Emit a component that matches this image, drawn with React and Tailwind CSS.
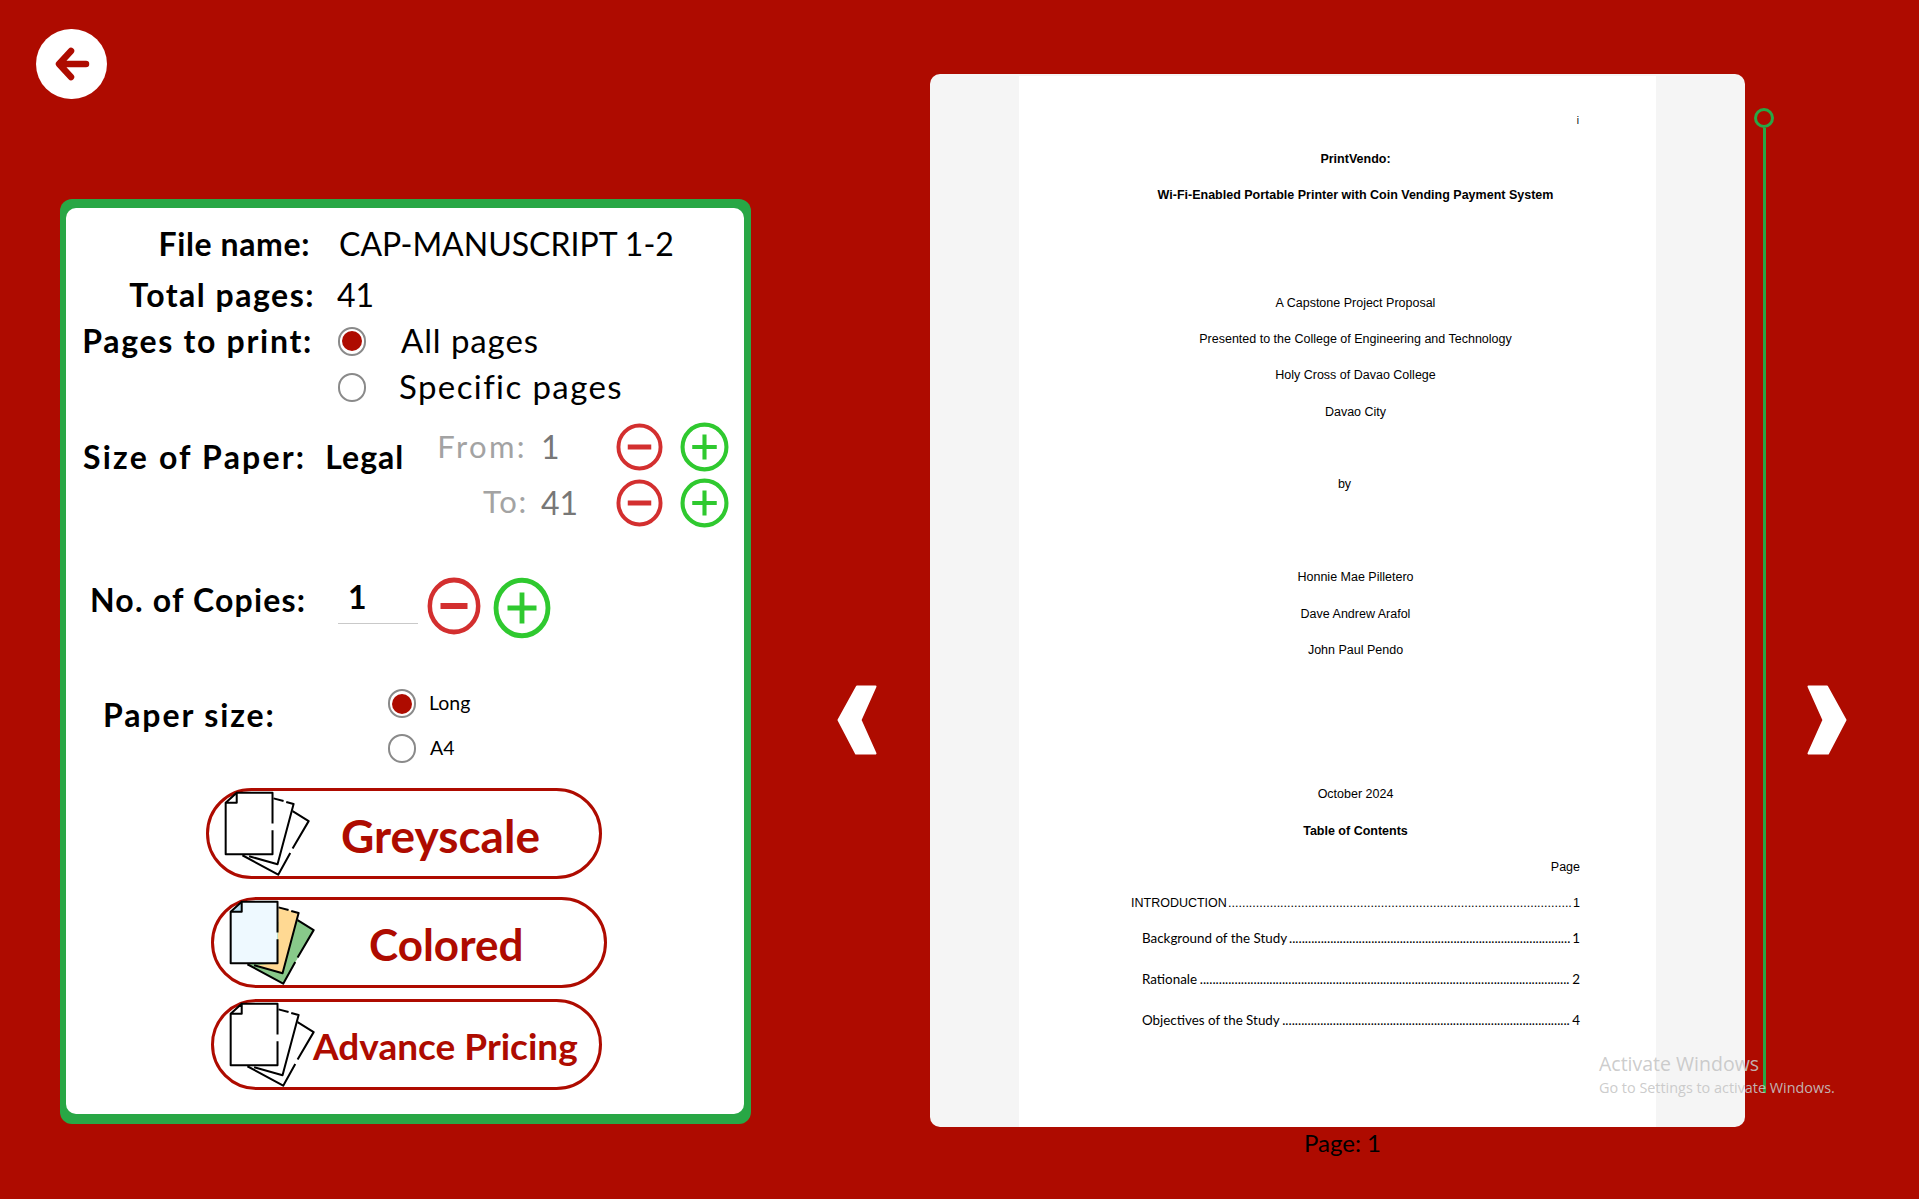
const FILLS = {
  plain: { back: "#ffffff", mid: "#ffffff", front: "#ffffff", notch: "#ffffff" },
  color: { back: "#88c98a", mid: "#ffd993", front: "#eef9ff", notch: "#b8dff0" },
};

function Papers({ kind = "plain" }) {
  const f = FILLS[kind];
  return (
    <svg viewBox="100 30 260 260" className="h-[87px] w-[87px] shrink-0">
      <polygon points="305,93 353,123 262,283 155,225 230,100" fill={f.back} />
      <polygon points="248,55 308,72 260,252 180,228 245,222" fill={f.mid} />
      <polygon points="138,38 245,38 245,222 105,222 105,68" fill={f.front} />
      <polygon points="138,38 138,68 105,68" fill={f.notch} />
      <g fill="none" stroke="#000" strokeWidth="6" strokeLinejoin="round">
        <path d="M305 93 L353 123 L305 205 M298 218 L262 283 L155 225" />
        <path d="M248 55 L278 63 M286 66 L308 72 L260 252 L175 228" />
        <path d="M138 38 H245 V130 M245 150 V222 H105 V68 L138 38 V68 H105" />
      </g>
    </svg>
  );
}

function Radio({ on }) {
  return (
    <span className="flex h-[29px] w-[28px] shrink-0 items-center justify-center rounded-full border-2 border-[#8a8a8a] bg-white">
      {on && <span className="h-[20px] w-[20px] rounded-full bg-[#ae0b00]" />}
    </span>
  );
}

function Round({ plus, className }) {
  const color = plus ? "#2fc92f" : "#d32f2f";
  return (
    <svg viewBox="0 0 48 48" preserveAspectRatio="none" className={className}>
      <ellipse cx="24" cy="24" rx="21.5" ry="21.5" fill="#fff" stroke={color} strokeWidth="4" />
      <path d={plus ? "M12 24 H36 M24 12 V36" : "M12 24 H36"} stroke={color} strokeWidth={plus ? 4 : 5} fill="none" />
    </svg>
  );
}

function Chevron({ flip }) {
  return (
    <svg viewBox="0 0 40 70" className={flip ? "h-[70px] w-[40px] shrink-0 -scale-x-100" : "h-[70px] w-[40px] shrink-0"}>
      <path d="M20 1.5 H38.5 L23.5 35 L38.5 68.5 H19 L1.5 35 Z" fill="#fff" stroke="#fff" strokeWidth="2" strokeLinejoin="round" />
    </svg>
  );
}

function Line({ className = "", children }) {
  return <div className={"h-[36.3px] whitespace-nowrap text-center leading-[36.3px] " + className}>{children}</div>;
}

function Leader({ label, dots, num, className = "" }) {
  return (
    <div className={"flex h-[36px] items-center justify-between whitespace-nowrap leading-[36px] " + className}>
      <span>{label}</span>
      <span>{".".repeat(dots)}</span>
      <span>{num}</span>
    </div>
  );
}

export default function App() {
  return (
    <div className="relative flex h-[1199px] w-[1919px] items-start overflow-hidden bg-[#ae0b00] font-['Lato',sans-serif] text-black">
      {/* left column */}
      <div className="w-[837px] shrink-0 pl-[36px] pt-[29px]">
        <div className="flex h-[70px] w-[71px] items-center justify-center rounded-full bg-white">
          <svg viewBox="0 0 40 40" className="h-[40px] w-[40px]">
            <path d="M34 20 H8 M19 7 L7 20 L19 33" fill="none" stroke="#ae0b00" strokeWidth="6.5" strokeLinecap="round" strokeLinejoin="round" />
          </svg>
        </div>

        <div className="ml-[24px] mt-[100px] h-[925px] w-[691px] rounded-[12px] bg-[#28a745] pb-[10px] pl-[6px] pr-[7px] pt-[9px]">
          <div className="h-full rounded-[10px] bg-white pt-[13px]">
            <div className="flex h-[46px] items-center">
              <div className="w-[244px] text-right text-[32px] font-bold tracking-[0.6px]">File name:</div>
              <div className="ml-[29px] whitespace-nowrap text-[32px]">CAP-MANUSCRIPT 1-2</div>
            </div>
            <div className="mt-[5px] flex h-[46px] items-center">
              <div className="w-[249px] text-right text-[32px] font-bold tracking-[1.5px]">Total pages:</div>
              <div className="ml-[22px] text-[32px]">41</div>
            </div>
            <div className="flex h-[46px] items-center">
              <div className="w-[247px] whitespace-nowrap text-right text-[32px] font-bold tracking-[1.7px]">Pages to print:</div>
              <div className="ml-[25px]"><Radio on /></div>
              <div className="ml-[35px] text-[33px] tracking-[0.9px]">All pages</div>
            </div>
            <div className="flex h-[46px] items-center">
              <div className="ml-[272px]"><Radio /></div>
              <div className="ml-[33px] text-[33px] tracking-[1.4px]">Specific pages</div>
            </div>

            <div className="mt-[9px] flex items-start">
              <div className="mt-[15px] flex h-[46px] w-[371px] items-center whitespace-nowrap pl-[17px] text-[32px] font-bold">
                <span className="tracking-[2.2px]">Size of Paper:</span>
                <span className="ml-[19px] tracking-[1px]">Legal</span>
              </div>
              <div>
                <div className="flex h-[56px] items-center">
                  <div className="w-[90px] pb-[2px] text-right text-[31px] tracking-[2.4px] text-[#a3a3a3]">From:</div>
                  <div className="ml-[14px] w-[75px] text-[32px] text-[#777777]">1</div>
                  <Round className="h-[48px] w-[47px]" />
                  <Round plus className="ml-[17px] h-[50px] w-[49px]" />
                </div>
                <div className="flex h-[56px] items-center">
                  <div className="w-[91px] pb-[3px] text-right text-[31px] tracking-[1.7px] text-[#a3a3a3]">To:</div>
                  <div className="ml-[13px] w-[75px] pb-[1px] text-[32px] text-[#777777]">41</div>
                  <Round className="h-[48px] w-[47px]" />
                  <Round plus className="ml-[17px] h-[50px] w-[49px]" />
                </div>
              </div>
            </div>

            <div className="mt-[46px] flex items-start pl-[24px]">
              <div className="flex h-[46px] w-[248px] items-center whitespace-nowrap text-[32px] font-bold tracking-[1.2px]">No. of Copies:</div>
              <div className="flex h-[47px] w-[80px] items-center border-b border-[#c9c9c9] pb-[6px] pl-[10px] text-[32px] font-bold">1</div>
              <Round className="ml-[9px] h-[58px] w-[54px]" />
              <Round plus className="ml-[12px] h-[62px] w-[58px]" />
            </div>

            <div className="mt-[42px] flex items-start pl-[37px]">
              <div className="mt-[11px] flex h-[46px] w-[285px] items-center text-[32px] font-bold tracking-[1.9px]">Paper size:</div>
              <div>
                <div className="flex h-[45px] items-center">
                  <Radio on />
                  <span className="mb-[2px] ml-[13px] text-[19.5px]">Long</span>
                </div>
                <div className="flex h-[45px] items-center">
                  <Radio />
                  <span className="mb-[2px] ml-[14px] text-[19.5px]">A4</span>
                </div>
              </div>
            </div>

            <div className="ml-[140px] mt-[17px] flex h-[91px] w-[396px] items-center rounded-full border-[3px] border-[#ae0b00] pl-[15px]">
              <Papers />
              <span className="ml-[30px] pt-[4px] text-[46px] font-bold leading-none text-[#ae0b00]">Greyscale</span>
            </div>
            <div className="ml-[145px] mt-[18px] flex h-[91px] w-[396px] items-center rounded-full border-[3px] border-[#ae0b00] pl-[15px]">
              <Papers kind="color" />
              <span className="ml-[53px] pt-[2px] text-[44px] font-bold leading-none text-[#ae0b00]">Colored</span>
            </div>
            <div className="ml-[145px] mt-[11px] flex h-[91px] w-[391px] items-center rounded-full border-[3px] border-[#ae0b00] pl-[15px]">
              <Papers />
              <span className="-ml-[3px] pt-[2px] whitespace-nowrap text-[37px] font-bold leading-none text-[#ae0b00]">Advance Pricing</span>
            </div>
          </div>
        </div>
      </div>

      <div className="mt-[685px]"><Chevron /></div>

      {/* document */}
      <div className="ml-[53px] mt-[74px] w-[815px] shrink-0">
        <div className="h-[1053px] overflow-hidden rounded-[10px] bg-[#f5f5f5] pl-[89px] pt-[2px]">
          <div className="h-full w-[637px] bg-white pl-[112px] pr-[76px] pt-[27px] font-['Liberation_Sans',sans-serif] text-[12.5px] text-black">
            <Line className="pr-[1px] text-right text-[10px]">i</Line>
            <Line className="-mb-[1px] mt-[2px] font-bold">PrintVendo:</Line>
            <Line className="font-bold">Wi-Fi-Enabled Portable Printer with Coin Vending Payment System</Line>
            <Line className="mt-[72px]">A Capstone Project Proposal</Line>
            <Line>Presented to the College of Engineering and Technology</Line>
            <Line>Holy Cross of Davao College</Line>
            <Line>Davao City</Line>
            <Line className="mt-[36px] pr-[22px]">by</Line>
            <Line className="mt-[57px]">Honnie Mae Pilletero</Line>
            <Line>Dave Andrew Arafol</Line>
            <Line>John Paul Pendo</Line>
            <Line className="mt-[108px]">October 2024</Line>
            <Line className="font-bold">Table of Contents</Line>
            <Line className="text-right">Page</Line>
            <Leader label="INTRODUCTION" dots={99} num="1" />
            <Leader label="Background of the Study" dots={89} num="1" className="-mt-[1px] pl-[11px] font-['Lato',sans-serif] text-[13.4px]" />
            <Leader label="Rationale" dots={117} num="2" className="mt-[5px] pl-[11px] font-['Lato',sans-serif] text-[13.4px]" />
            <Leader label="Objectives of the Study" dots={91} num="4" className="mt-[5px] pl-[11px] font-['Lato',sans-serif] text-[13.4px]" />
          </div>
        </div>
        <div className="ml-[10px] h-[32px] text-center text-[24px] leading-[32px]">Page: 1</div>
      </div>

      {/* slider */}
      <div className="ml-[9px] mt-[108px] flex w-[20px] shrink-0 flex-col items-center">
        <div className="h-[20px] w-[20px] rounded-full border-[3px] border-[#28a745]" />
        <div className="h-[965px] w-[3px] bg-[#28a745]" />
      </div>

      <div className="ml-[33px] mt-[685px]"><Chevron flip /></div>

      {/* Windows watermark */}
      <div className="pointer-events-none absolute left-[1599px] top-[1050px] whitespace-nowrap font-['Open_Sans',sans-serif] text-[#c6c6c6]/90">
        <div className="text-[19.5px] leading-[28px]">Activate Windows</div>
        <div className="text-[14.4px] leading-[20px]">Go to Settings to activate Windows.</div>
      </div>
    </div>
  );
}
